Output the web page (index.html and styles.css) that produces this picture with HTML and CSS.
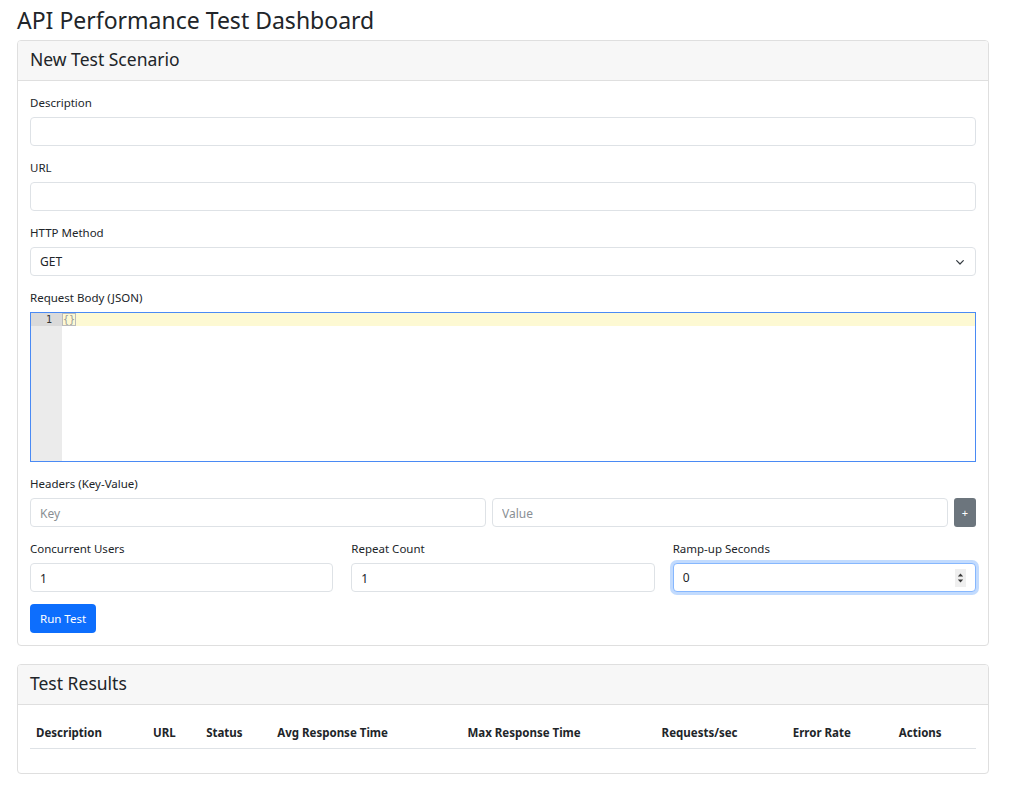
FILE: index.html
```html
<!DOCTYPE html>
<html lang="en">
<head>
<meta charset="utf-8">
<title>API Performance Test Dashboard</title>
<link rel="stylesheet" href="styles.css">
</head>
<body>
<div class="container">
  <h1 class="page-title">API Performance Test Dashboard</h1>

  <section class="card">
    <div class="card-header"><h2 class="card-title">New Test Scenario</h2></div>
    <div class="card-body">
      <div class="field">
        <label class="label">Description</label>
        <input class="input" type="text">
      </div>
      <div class="field">
        <label class="label">URL</label>
        <input class="input" type="text">
      </div>
      <div class="field">
        <label class="label">HTTP Method</label>
        <div class="select">
          <span>GET</span>
          <svg class="chev" width="8" height="5" viewBox="0 0 8 5"><path d="M0.7 0.7 L4 4 L7.3 0.7" fill="none" stroke="#343a40" stroke-width="1.2" stroke-linecap="round" stroke-linejoin="round"/></svg>
        </div>
      </div>
      <div class="field">
        <label class="label">Request Body (JSON)</label>
        <div class="editor">
          <div class="gutter"><div class="gutter-active">1</div></div>
          <div class="code"><div class="active-line"><span class="bracket">{}</span></div></div>
        </div>
      </div>
      <div class="field">
        <label class="label">Headers (Key-Value)</label>
        <div class="header-row">
          <input class="input" type="text" placeholder="Key">
          <input class="input" type="text" placeholder="Value">
          <button class="btn-add">+</button>
        </div>
      </div>
      <div class="three-col">
        <div>
          <label class="label">Concurrent Users</label>
          <input class="input" type="text" value="1">
        </div>
        <div>
          <label class="label">Repeat Count</label>
          <input class="input" type="text" value="1">
        </div>
        <div>
          <label class="label">Ramp-up Seconds</label>
          <div class="input focus num">
            <span>0</span>
            <span class="spin">
              <svg width="7" height="12" viewBox="0 0 7 12"><path d="M0.8 4.6 L3.5 1.4 L6.2 4.6 Z M0.8 7.4 L3.5 10.6 L6.2 7.4 Z" fill="#3a3a3a"/></svg>
            </span>
          </div>
        </div>
      </div>
      <button class="btn-primary">Run Test</button>
    </div>
  </section>

  <section class="card">
    <div class="card-header"><h2 class="card-title">Test Results</h2></div>
    <div class="card-body">
      <table class="table">
        <thead>
          <tr>
            <th class="c1">Description</th>
            <th class="c2">URL</th>
            <th class="c3">Status</th>
            <th class="c4">Avg Response Time</th>
            <th class="c5">Max Response Time</th>
            <th class="c6">Requests/sec</th>
            <th class="c7">Error Rate</th>
            <th class="c8">Actions</th>
          </tr>
        </thead>
        <tbody></tbody>
      </table>
    </div>
  </section>
</div>
</body>
</html>
```
FILE: styles.css
```css
* { box-sizing: border-box; }
html, body { margin: 0; padding: 0; background: #fff; }
body {
  font-family: "Noto Sans", "Open Sans", sans-serif;
  font-size: 12px;
  line-height: 18px;
  color: #212529;
}
.container {
  padding: 8px 31px 0 17px;
}
.page-title {
  font-size: 23px;
  font-weight: 400;
  line-height: 25px;
  margin: 0 0 7px;
}
.card {
  border: 1px solid #dfdfdf;
  border-radius: 4px;
  margin-bottom: 18px;
  overflow: hidden;
}
.card-header {
  background: #f7f7f7;
  border-bottom: 1px solid #dfdfdf;
  padding: 7px 12px 11px;
  height: 40px;
}
.card-title {
  font-size: 17.5px;
  font-weight: 400;
  line-height: 22px;
  margin: 0;
}
.card-body {
  padding: 12px;
}
.field { margin-bottom: 12px; }
.label {
  display: block;
  font-size: 11.5px;
  padding-top: 1px;
  margin-bottom: 5px;
  line-height: 18px;
}
.input {
  display: block;
  width: 100%;
  height: 29px;
  border: 1px solid #dee2e6;
  border-radius: 4px;
  padding: 5px 9px 3px;
  font: inherit;
  font-size: 12px;
  color: #212529;
  background: #fff;
  outline: none;
}
.input::placeholder { color: #8a8f94; }
.select {
  height: 29px;
  border: 1px solid #dee2e6;
  border-radius: 4px;
  padding: 1px 11px 0 9px;
  display: flex;
  align-items: center;
  justify-content: space-between;
}
.editor {
  height: 150px;
  border: 1px solid #4a8af4;
  display: flex;
  font-family: "DejaVu Sans Mono", monospace;
  font-size: 10px;
  line-height: 13px;
}
.gutter {
  width: 31px;
  background: #ebebeb;
  flex: none;
}
.gutter-active {
  background: #dadada;
  text-align: right;
  padding-right: 10px;
  color: #333;
  height: 13px;
}
.code { flex: 1; }
.active-line {
  background: #fdf9d3;
  height: 13px;
  padding-left: 1px;
  color: #666;
}
.bracket {
  outline: 1px solid #bbb;
  color: #999;
}
.header-row {
  display: flex;
  gap: 6px;
}
.header-row .input { flex: 1; }
.btn-add {
  flex: none;
  width: 22px;
  height: 29px;
  border: none;
  border-radius: 3px;
  background: #6c757d;
  color: #fff;
  font: inherit;
  font-size: 11px;
  padding: 0;
}
.three-col {
  display: grid;
  grid-template-columns: 1fr 1fr 1fr;
  column-gap: 18px;
  margin-bottom: 12px;
}
.focus {
  border-color: #86b7fe;
  box-shadow: 0 0 0 3px rgba(13,110,253,.25);
}
.num {
  display: flex;
  align-items: center;
  justify-content: space-between;
  padding: 1px 9px 0;
}
.spin {
  display: flex;
  align-items: center;
  justify-content: center;
  width: 11px;
  height: 18px;
  background: #efefef;
}
.btn-primary {
  display: block;
  height: 29px;
  padding: 1px 10px 0;
  border: none;
  border-radius: 4px;
  background: #0d6efd;
  color: #fff;
  font: inherit;
  font-size: 11.5px;
}
.table {
  width: 100%;
  border-collapse: collapse;
  table-layout: fixed;
  margin-bottom: 12px;
}
.table th {
  text-align: left;
  font-weight: 700;
  font-size: 11.5px;
  padding: 7px 6px 6px;
  border-bottom: 1px solid #dee2e6;
  line-height: 18px;
}
.c1 { width: 117px; }
.c2 { width: 53px; }
.c3 { width: 71px; }
.c4 { width: 190px; }
.c5 { width: 194px; }
.c6 { width: 131px; }
.c7 { width: 106px; }
.c8 { width: 83px; }
```
